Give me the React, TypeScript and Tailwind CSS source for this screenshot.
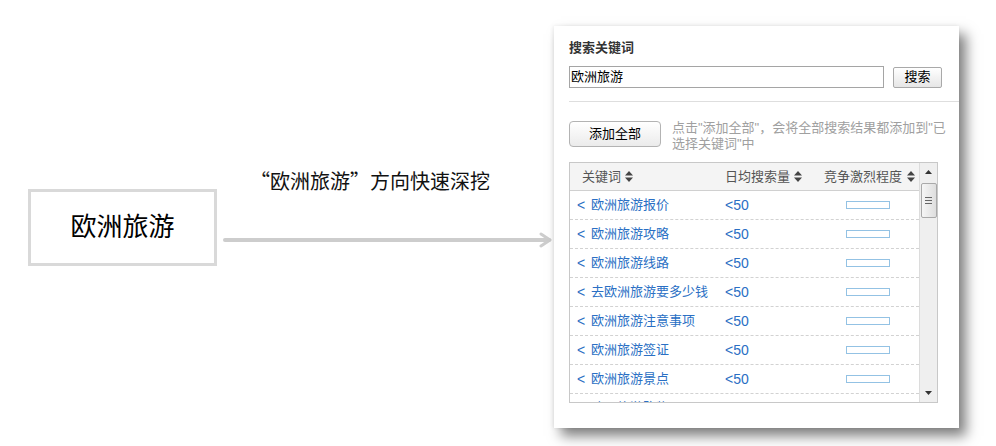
import React from 'react'

const keywords = [
  '欧洲旅游报价',
  '欧洲旅游攻略',
  '欧洲旅游线路',
  '去欧洲旅游要多少钱',
  '欧洲旅游注意事项',
  '欧洲旅游签证',
  '欧洲旅游景点',
  '欧洲旅游购物',
]

function SortIcon() {
  return (
    <svg width="8" height="11" viewBox="0 0 8 11" className="shrink-0">
      <path d="M4 0 L8 4.5 L0 4.5 Z" fill="#444" />
      <path d="M4 11 L8 6.5 L0 6.5 Z" fill="#444" />
    </svg>
  )
}

function Arrow() {
  return (
    <svg width="332" height="16" viewBox="0 0 332 16" className="block">
      <g stroke="#cdcdcd" strokeWidth="4" fill="none" strokeLinecap="round" strokeLinejoin="round">
        <line x1="2" y1="8" x2="326" y2="8" />
        <path d="M318 2 L327 8 L318 14" strokeWidth="3" />
      </g>
    </svg>
  )
}

function Scrollbar() {
  return (
    <div className="w-[18px] shrink-0 bg-[#efefef] border-l border-[#dcdcdc] flex flex-col items-center">
      <div className="h-[18px] flex items-center justify-center">
        <svg width="7" height="4" viewBox="0 0 7 4"><path d="M3.5 0 L7 4 L0 4 Z" fill="#333" /></svg>
      </div>
      <div className="mt-[2px] w-[16px] h-[35px] rounded-[2px] border border-[#a9a9a9] bg-gradient-to-r from-[#f6f6f6] to-[#dedede] flex flex-col items-center justify-center gap-[2px]">
        <div className="w-[7px] h-px bg-[#666]" />
        <div className="w-[7px] h-px bg-[#666]" />
        <div className="w-[7px] h-px bg-[#666]" />
      </div>
      <div className="flex-1" />
      <div className="h-[18px] flex items-center justify-center">
        <svg width="7" height="4" viewBox="0 0 7 4"><path d="M0 0 L7 0 L3.5 4 Z" fill="#333" /></svg>
      </div>
    </div>
  )
}

function KeywordPanel() {
  return (
    <div className="w-[405px] h-[402px] mt-[26px] bg-white shadow-[7px_8px_12px_rgba(0,0,0,0.5),-1px_0_4px_rgba(0,0,0,0.08)] pl-[15px] pt-[14px] text-[13px] leading-[16px]">
      <div className="font-bold text-[#333]">搜索关键词</div>

      <div className="flex items-center gap-[9px] mt-[10px]">
        <div className="w-[315px] h-[22px] border border-[#a5a5a5] flex items-center pl-[1px] text-black">欧洲旅游</div>
        <button className="w-[49px] h-[21px] border border-[#a9a9a9] rounded-[2px] bg-gradient-to-b from-white to-[#e6e6e6] text-black text-[13px]">
          搜索
        </button>
      </div>

      <div className="h-px bg-[#dedede] mt-[13px]" />

      <div className="flex items-start mt-[18px]">
        <button className="w-[92px] h-[26px] shrink-0 mt-px border border-[#b3b3b3] rounded-[4px] bg-gradient-to-b from-white to-[#ebebeb] text-black text-[13px]">
          添加全部
        </button>
        <p className="ml-[11px] text-[#a0a0a0] leading-[16px]">
          点击"添加全部"，会将全部搜索结果都添加到"已
          <br />
          选择关键词"中
        </p>
      </div>

      <div className="mt-[10px] w-[369px] h-[241px] border border-[#c8c8c8] flex overflow-hidden">
        <div className="flex-1 flex flex-col overflow-hidden">
          <div className="h-[28px] shrink-0 bg-[#f4f4f4] border-b border-[#d0d0d0] flex items-center text-[#555]">
            <div className="w-[155px] pl-[12px] flex items-center gap-[4px]">
              关键词
              <SortIcon />
            </div>
            <div className="w-[99px] flex items-center gap-[4px]">
              日均搜索量
              <SortIcon />
            </div>
            <div className="flex-1 flex items-center gap-[5px]">
              竞争激烈程度
              <SortIcon />
            </div>
          </div>
          {keywords.map((k) => (
            <div key={k} className="h-[29px] shrink-0 border-b border-dashed border-[#d2d2d2] flex items-center text-[#2a6fc4]">
              <div className="w-[155px] pl-[7px] flex items-center text-[14px]">
                <span className="w-[14px]">&lt;</span>
                <span className="text-[13px]">{k}</span>
              </div>
              <div className="w-[99px] text-[14px] font-['Liberation_Sans',sans-serif]">&lt;50</div>
              <div className="flex-1 pl-[22px]">
                <div className="w-[44px] h-[8px] border-[1.5px] border-[#93c2e4] bg-white" />
              </div>
            </div>
          ))}
        </div>
        <Scrollbar />
      </div>
    </div>
  )
}

export default function App() {
  return (
    <div className="w-[996px] h-[446px] bg-white flex items-start overflow-hidden font-['Liberation_Sans','Noto_Sans_CJK_SC',sans-serif]">
      <div className="w-[554px] shrink-0 flex items-start pl-[28px] pt-[168px]">
        <div className="w-[189px] h-[77px] mt-[21px] shrink-0 border-[3px] border-[#d9d9d9] flex items-center justify-center text-[26px] text-black">
          欧洲旅游
        </div>
        <div className="ml-[6px] flex flex-col">
          <div className="pl-[27px] text-[20px] leading-[26px] text-[#111] whitespace-nowrap font-['Noto_Sans_CJK_SC',sans-serif]">“欧洲旅游”方向快速深挖</div>
          <div className="mt-[38px]">
            <Arrow />
          </div>
        </div>
      </div>
      <KeywordPanel />
    </div>
  )
}
